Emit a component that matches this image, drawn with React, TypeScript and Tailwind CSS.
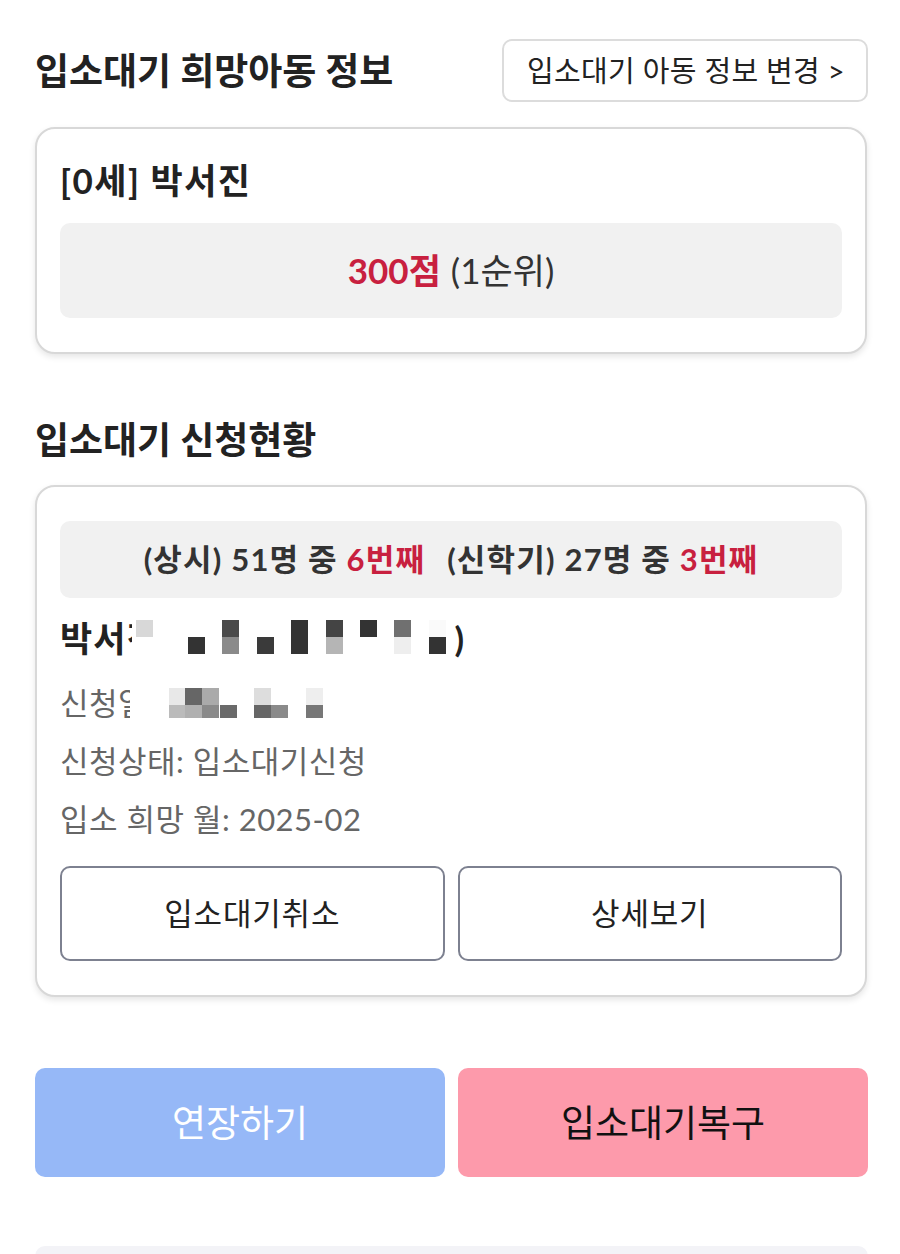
import React from "react";

const FONT = { fontFamily: "Lato, 'Noto Sans CJK KR', 'Noto Sans', sans-serif" };

type Block = { x: number; y: number; h: number; c: string };

const nameBlocks: Block[] = [
  { x: 4, y: 22, h: 17, c: "#d8d8d8" },
  { x: 56, y: 39, h: 17, c: "#333333" },
  { x: 90, y: 22, h: 17, c: "#4a4a4a" },
  { x: 90, y: 39, h: 17, c: "#8a8a8a" },
  { x: 125, y: 39, h: 17, c: "#3a3a3a" },
  { x: 159, y: 22, h: 34, c: "#333333" },
  { x: 194, y: 22, h: 17, c: "#444444" },
  { x: 194, y: 39, h: 17, c: "#b5b5b5" },
  { x: 228, y: 22, h: 17, c: "#333333" },
  { x: 262, y: 22, h: 17, c: "#707070" },
  { x: 262, y: 39, h: 17, c: "#eeeeee" },
  { x: 297, y: 22, h: 17, c: "#fafafa" },
  { x: 297, y: 39, h: 17, c: "#333333" },
];

const dateBlocks: Block[] = [
  { x: 39, y: 5, h: 17, c: "#e8e8e8" },
  { x: 39, y: 22, h: 13, c: "#bbbbbb" },
  { x: 55, y: 5, h: 17, c: "#666666" },
  { x: 55, y: 22, h: 13, c: "#b0b0b0" },
  { x: 72, y: 5, h: 17, c: "#aaaaaa" },
  { x: 72, y: 22, h: 13, c: "#8a8a8a" },
  { x: 90, y: 22, h: 13, c: "#6a6a6a" },
  { x: 124, y: 5, h: 17, c: "#dddddd" },
  { x: 124, y: 22, h: 13, c: "#666666" },
  { x: 141, y: 22, h: 13, c: "#8a8a8a" },
  { x: 176, y: 5, h: 17, c: "#eeeeee" },
  { x: 176, y: 22, h: 13, c: "#777777" },
];

function Mosaic({ blocks, w, h }: { blocks: Block[]; w: number; h: number }) {
  return (
    <span className="relative inline-block bg-white" style={{ width: w, height: h }}>
      {blocks.map((b, i) => (
        <span
          key={i}
          className="absolute w-[17px]"
          style={{ left: b.x, top: b.y, height: b.h, background: b.c }}
        />
      ))}
    </span>
  );
}

export default function App() {
  return (
    <div className="min-h-[1254px] bg-white pl-[35px] pr-[32px] pt-[39px] text-[#222222]" style={FONT}>
      {/* Header */}
      <div className="flex items-center justify-between">
        <h1 className="text-[37px] font-bold leading-[44px]">입소대기 희망아동 정보</h1>
        <button className="flex h-[63px] w-[366px] items-center justify-center rounded-[10px] border-2 border-[#dcdcdc] bg-white pl-[2px] text-[29px] tracking-[0.3px] text-[#222222]">
          입소대기 아동 정보 변경 &gt;
        </button>
      </div>

      {/* Card 1 */}
      <div className="mr-[1px] mt-[25px] rounded-[20px] border-2 border-[#d8d8d8] bg-white px-[23px] pb-[34px] pt-[29px] shadow-[0_3px_6px_rgba(0,0,0,0.10)]">
        <div className="text-[35px] font-bold leading-[44px] tracking-[1.5px]">[0세] 박서진</div>
        <div className="mt-[21px] flex h-[95px] items-center justify-center rounded-[10px] bg-[#f1f1f1] text-[35px]">
          <span className="font-bold text-[#c8203f]">300점</span>
          <span className="ml-[10px] text-[#333333]">(1순위)</span>
        </div>
      </div>

      {/* Section 2 */}
      <h2 className="mt-[64px] text-[37px] font-bold leading-[44px]">입소대기 신청현황</h2>

      <div className="mr-[1px] mt-[23px] rounded-[20px] border-2 border-[#d8d8d8] bg-white px-[23px] pb-[34px] pt-[34px] shadow-[0_3px_6px_rgba(0,0,0,0.10)]">
        <div className="flex h-[77px] items-center justify-center rounded-[10px] bg-[#f1f1f1] text-[31px] font-bold tracking-[1.2px] text-[#333333]">
          <span>(상시) 51명 중 <span className="text-[#c8203f]">6번째</span></span>
          <span className="ml-[22px]">(신학기) 27명 중 <span className="text-[#c8203f]">3번째</span></span>
        </div>

        <div className="mt-[18px] flex h-[44px] items-center text-[35px] font-bold leading-[44px] tracking-[1px] text-[#222222]">
          <span>박서</span>
          <span className="inline-block w-[6px] overflow-hidden whitespace-nowrap tracking-normal">진</span>
          <span className="-mt-[18px] self-start">
            <Mosaic blocks={nameBlocks} w={322} h={62} />
          </span>
          <span>)</span>
        </div>

        <div className="mt-[23px] flex h-[40px] items-center text-[31px] leading-[40px] tracking-[0.5px] text-[#666666]">
          <span>신청</span>
          <span className="inline-block w-[12px] overflow-hidden whitespace-nowrap tracking-normal">일</span>
          <Mosaic blocks={dateBlocks} w={220} h={40} />
        </div>
        <div className="mt-[18px] h-[40px] text-[31px] leading-[40px] tracking-[0.5px] text-[#666666]">신청상태: 입소대기신청</div>
        <div className="mt-[18px] h-[40px] text-[31px] leading-[40px] tracking-[0.5px] text-[#666666]">입소 희망 월: 2025-02</div>

        <div className="mt-[27px] grid grid-cols-2 gap-[13px]">
          <button className="flex h-[95px] items-center justify-center rounded-[10px] border-2 border-[#7d8190] bg-white text-[31px] tracking-[0.8px] text-[#222222]">
            입소대기취소
          </button>
          <button className="flex h-[95px] items-center justify-center rounded-[10px] border-2 border-[#7d8190] bg-white text-[31px] tracking-[0.8px] text-[#222222]">
            상세보기
          </button>
        </div>
      </div>

      {/* Bottom buttons */}
      <div className="mt-[71px] grid grid-cols-2 gap-[13px]">
        <button className="flex h-[109px] items-center justify-center rounded-[10px] bg-[#96b8f7] text-[37px] text-white">
          연장하기
        </button>
        <button className="flex h-[109px] items-center justify-center rounded-[10px] bg-[#fd9aab] text-[37px] text-[#111111]">
          입소대기복구
        </button>
      </div>

      <div className="mt-[69px] h-[40px] rounded-t-[10px] bg-[#f3f3f7]" />
    </div>
  );
}
